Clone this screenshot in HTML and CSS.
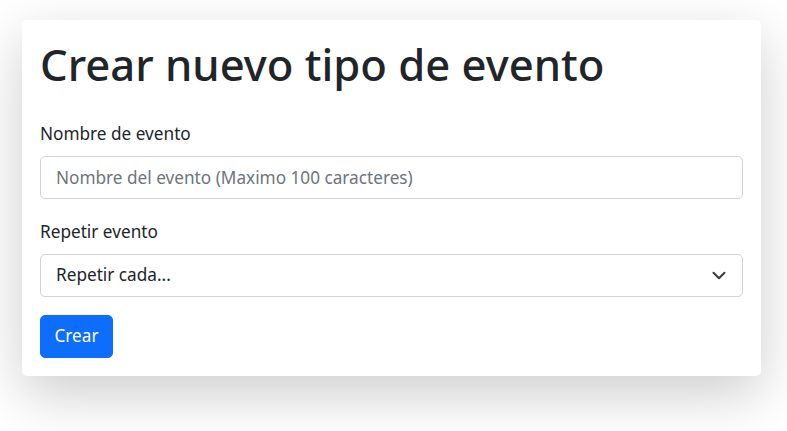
FILE: index.html
```html
<!DOCTYPE html>
<html lang="es">
<head>
<meta charset="utf-8">
<title>Crear nuevo tipo de evento</title>
<link rel="stylesheet" href="styles.css">
</head>
<body>
<div class="page">
  <form class="card">
    <h1 class="title">Crear nuevo tipo de evento</h1>
    <div class="field">
      <label class="label" for="nombre">Nombre de evento</label>
      <input class="control" id="nombre" type="text" placeholder="Nombre del evento (Maximo 100 caracteres)">
    </div>
    <div class="field field-last">
      <label class="label" for="repetir">Repetir evento</label>
      <div class="select">
        <span class="select-text">Repetir cada...</span>
        <svg class="chevron" width="14" height="9" viewBox="0 0 14 9"><path fill="none" stroke="#343a40" stroke-linecap="round" stroke-linejoin="round" stroke-width="2" d="M1.5 1.8 7 7.2l5.5-5.4"/></svg>
      </div>
    </div>
    <div class="actions">
      <button class="btn" type="button">Crear</button>
    </div>
  </form>
</div>
</body>
</html>
```
FILE: styles.css
```css
* { box-sizing: border-box; }
html { min-height: 100%; height: 100%; }
html, body { margin: 0; padding: 0; background: #fff; }
body {
  min-height: 100%;
  font-family: "Noto Sans", "Open Sans", sans-serif;
  font-size: 17.2px;
  line-height: 1.55;
  color: #212529;
}
.page {
  padding: 20px 26px 0 22px;
}
.card {
  background: #fff;
  border-radius: 5px;
  box-shadow: 0 18px 55px rgba(0, 0, 0, 0.2);
  padding: 18px 18px 18.5px;
  display: flex;
  flex-direction: column;
}
.title {
  margin: 0 0 31px;
  font-size: 43.6px;
  font-weight: 500;
  line-height: 1.2;
}
.field {
  display: flex;
  flex-direction: column;
  margin-bottom: 20px;
}
.field-last { margin-bottom: 18.5px; }
.label {
  margin-bottom: 8.5px;
}
.control {
  font: inherit;
  color: #212529;
  height: 42.6px;
  padding: 6px 15px;
  border: 1px solid #ced4da;
  border-radius: 5px;
  outline: none;
}
.control::placeholder { color: #6c757d; opacity: 1; }
.select {
  height: 42.6px;
  padding: 0 16px 0 15px;
  border: 1px solid #ced4da;
  border-radius: 5px;
  display: flex;
  align-items: center;
  justify-content: space-between;
}
.chevron { display: block; }
.actions { display: flex; }
.btn {
  font: inherit;
  color: #fff;
  background: #0d6efd;
  border: 1px solid #0d6efd;
  border-radius: 5px;
  height: 42.6px;
  width: 73px;
  padding: 0;
}
```
